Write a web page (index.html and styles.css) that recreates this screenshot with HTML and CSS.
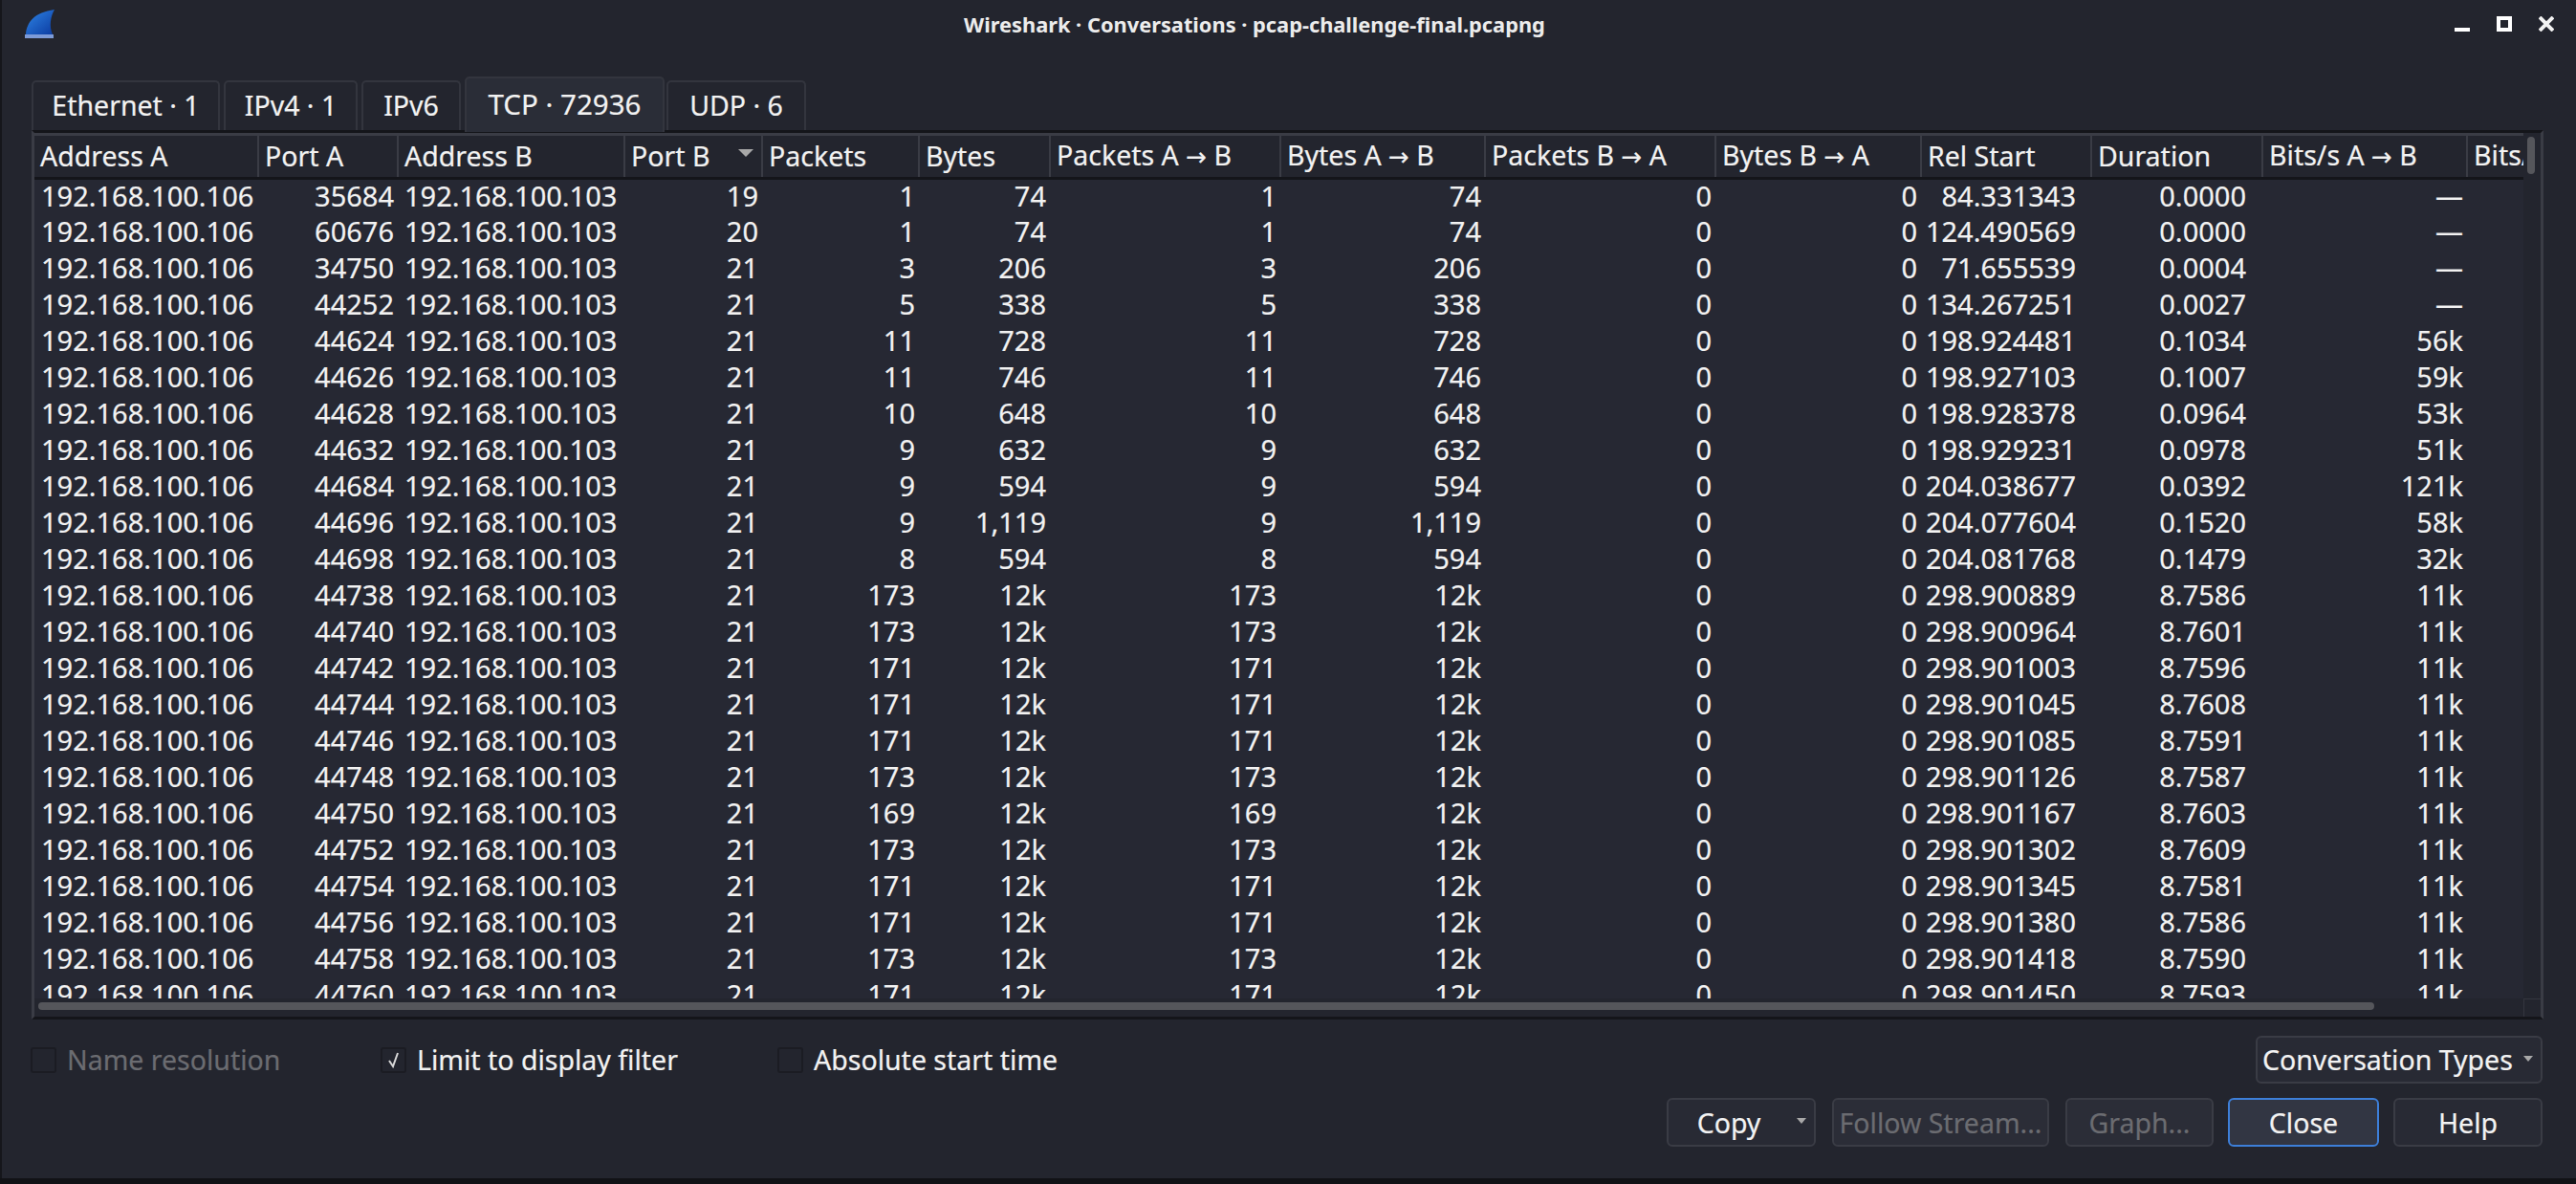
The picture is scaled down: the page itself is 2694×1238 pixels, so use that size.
FILE: index.html
```html
<!DOCTYPE html>
<html lang="en">
<head>
    <meta charset="UTF-8">
    <title>Wireshark · Conversations · pcap-challenge-final.pcapng</title>
    <link rel="stylesheet" href="styles.css">
</head>
<body>
<div class="window">
    <div class="titlebar">
        <svg class="logo" viewBox="0 0 32 32" width="32" height="32">
            <defs>
                <linearGradient id="fin" x1="0" y1="0" x2="1" y2="1">
                    <stop offset="0" stop-color="#2f86e6"/>
                    <stop offset="1" stop-color="#0b3aa0"/>
                </linearGradient>
            </defs>
            <path d="M1 27 C2 14 10 4 31 1 C27 8 25 18 29 27 Z" fill="url(#fin)"/>
            <rect x="0" y="27" width="30" height="4" fill="#7d9bd8"/>
        </svg>
        <div class="title">Wireshark · Conversations · pcap-challenge-final.pcapng</div>
        <div class="controls">
            <svg viewBox="0 0 16 16" width="16" height="16"><rect x="0" y="12" width="16" height="4" fill="#fff"/></svg>
            <svg viewBox="0 0 16 16" width="16" height="16"><rect x="2" y="2" width="12" height="12" fill="none" stroke="#fff" stroke-width="4"/></svg>
            <svg viewBox="0 0 16 16" width="16" height="16"><path d="M1 1 L15 15 M15 1 L1 15" stroke="#f2f2f2" stroke-width="4"/></svg>
        </div>
    </div>

    <div class="tabs">
        <div class="tab tab-eth">Ethernet · 1</div>
        <div class="tab tab-ip4">IPv4 · 1</div>
        <div class="tab tab-ip6">IPv6</div>
        <div class="tab tab-tcp selected">TCP · 72936</div>
        <div class="tab tab-udp">UDP · 6</div>
    </div>

    <div class="pane">
        <div class="view">
            <div class="table-clip">
                <table>
                    <colgroup>
                        <col class="c1"><col class="c2"><col class="c3"><col class="c4"><col class="c5"><col class="c6"><col class="c7"><col class="c8"><col class="c9"><col class="c10"><col class="c11"><col class="c12"><col class="c13"><col class="c14">
                    </colgroup>
                    <thead>
                        <tr>
                            <th>Address A</th><th>Port A</th><th>Address B</th><th class="sorted">Port B</th><th>Packets</th><th>Bytes</th><th>Packets A <span class="arrow">→</span> B</th><th>Bytes A <span class="arrow">→</span> B</th><th>Packets B <span class="arrow">→</span> A</th><th>Bytes B <span class="arrow">→</span> A</th><th>Rel Start</th><th>Duration</th><th>Bits/s A <span class="arrow">→</span> B</th><th>Bits/s B <span class="arrow">→</span> A</th>
                        </tr>
                    </thead>
                    <tbody>
                        <tr><td class="l">192.168.100.106</td><td>35684</td><td class="l">192.168.100.103</td><td>19</td><td>1</td><td>74</td><td>1</td><td>74</td><td>0</td><td>0</td><td>84.331343</td><td>0.0000</td><td>—</td><td></td></tr>
                        <tr><td class="l">192.168.100.106</td><td>60676</td><td class="l">192.168.100.103</td><td>20</td><td>1</td><td>74</td><td>1</td><td>74</td><td>0</td><td>0</td><td>124.490569</td><td>0.0000</td><td>—</td><td></td></tr>
                        <tr><td class="l">192.168.100.106</td><td>34750</td><td class="l">192.168.100.103</td><td>21</td><td>3</td><td>206</td><td>3</td><td>206</td><td>0</td><td>0</td><td>71.655539</td><td>0.0004</td><td>—</td><td></td></tr>
                        <tr><td class="l">192.168.100.106</td><td>44252</td><td class="l">192.168.100.103</td><td>21</td><td>5</td><td>338</td><td>5</td><td>338</td><td>0</td><td>0</td><td>134.267251</td><td>0.0027</td><td>—</td><td></td></tr>
                        <tr><td class="l">192.168.100.106</td><td>44624</td><td class="l">192.168.100.103</td><td>21</td><td>11</td><td>728</td><td>11</td><td>728</td><td>0</td><td>0</td><td>198.924481</td><td>0.1034</td><td>56k</td><td></td></tr>
                        <tr><td class="l">192.168.100.106</td><td>44626</td><td class="l">192.168.100.103</td><td>21</td><td>11</td><td>746</td><td>11</td><td>746</td><td>0</td><td>0</td><td>198.927103</td><td>0.1007</td><td>59k</td><td></td></tr>
                        <tr><td class="l">192.168.100.106</td><td>44628</td><td class="l">192.168.100.103</td><td>21</td><td>10</td><td>648</td><td>10</td><td>648</td><td>0</td><td>0</td><td>198.928378</td><td>0.0964</td><td>53k</td><td></td></tr>
                        <tr><td class="l">192.168.100.106</td><td>44632</td><td class="l">192.168.100.103</td><td>21</td><td>9</td><td>632</td><td>9</td><td>632</td><td>0</td><td>0</td><td>198.929231</td><td>0.0978</td><td>51k</td><td></td></tr>
                        <tr><td class="l">192.168.100.106</td><td>44684</td><td class="l">192.168.100.103</td><td>21</td><td>9</td><td>594</td><td>9</td><td>594</td><td>0</td><td>0</td><td>204.038677</td><td>0.0392</td><td>121k</td><td></td></tr>
                        <tr><td class="l">192.168.100.106</td><td>44696</td><td class="l">192.168.100.103</td><td>21</td><td>9</td><td>1,119</td><td>9</td><td>1,119</td><td>0</td><td>0</td><td>204.077604</td><td>0.1520</td><td>58k</td><td></td></tr>
                        <tr><td class="l">192.168.100.106</td><td>44698</td><td class="l">192.168.100.103</td><td>21</td><td>8</td><td>594</td><td>8</td><td>594</td><td>0</td><td>0</td><td>204.081768</td><td>0.1479</td><td>32k</td><td></td></tr>
                        <tr><td class="l">192.168.100.106</td><td>44738</td><td class="l">192.168.100.103</td><td>21</td><td>173</td><td>12k</td><td>173</td><td>12k</td><td>0</td><td>0</td><td>298.900889</td><td>8.7586</td><td>11k</td><td></td></tr>
                        <tr><td class="l">192.168.100.106</td><td>44740</td><td class="l">192.168.100.103</td><td>21</td><td>173</td><td>12k</td><td>173</td><td>12k</td><td>0</td><td>0</td><td>298.900964</td><td>8.7601</td><td>11k</td><td></td></tr>
                        <tr><td class="l">192.168.100.106</td><td>44742</td><td class="l">192.168.100.103</td><td>21</td><td>171</td><td>12k</td><td>171</td><td>12k</td><td>0</td><td>0</td><td>298.901003</td><td>8.7596</td><td>11k</td><td></td></tr>
                        <tr><td class="l">192.168.100.106</td><td>44744</td><td class="l">192.168.100.103</td><td>21</td><td>171</td><td>12k</td><td>171</td><td>12k</td><td>0</td><td>0</td><td>298.901045</td><td>8.7608</td><td>11k</td><td></td></tr>
                        <tr><td class="l">192.168.100.106</td><td>44746</td><td class="l">192.168.100.103</td><td>21</td><td>171</td><td>12k</td><td>171</td><td>12k</td><td>0</td><td>0</td><td>298.901085</td><td>8.7591</td><td>11k</td><td></td></tr>
                        <tr><td class="l">192.168.100.106</td><td>44748</td><td class="l">192.168.100.103</td><td>21</td><td>173</td><td>12k</td><td>173</td><td>12k</td><td>0</td><td>0</td><td>298.901126</td><td>8.7587</td><td>11k</td><td></td></tr>
                        <tr><td class="l">192.168.100.106</td><td>44750</td><td class="l">192.168.100.103</td><td>21</td><td>169</td><td>12k</td><td>169</td><td>12k</td><td>0</td><td>0</td><td>298.901167</td><td>8.7603</td><td>11k</td><td></td></tr>
                        <tr><td class="l">192.168.100.106</td><td>44752</td><td class="l">192.168.100.103</td><td>21</td><td>173</td><td>12k</td><td>173</td><td>12k</td><td>0</td><td>0</td><td>298.901302</td><td>8.7609</td><td>11k</td><td></td></tr>
                        <tr><td class="l">192.168.100.106</td><td>44754</td><td class="l">192.168.100.103</td><td>21</td><td>171</td><td>12k</td><td>171</td><td>12k</td><td>0</td><td>0</td><td>298.901345</td><td>8.7581</td><td>11k</td><td></td></tr>
                        <tr><td class="l">192.168.100.106</td><td>44756</td><td class="l">192.168.100.103</td><td>21</td><td>171</td><td>12k</td><td>171</td><td>12k</td><td>0</td><td>0</td><td>298.901380</td><td>8.7586</td><td>11k</td><td></td></tr>
                        <tr><td class="l">192.168.100.106</td><td>44758</td><td class="l">192.168.100.103</td><td>21</td><td>173</td><td>12k</td><td>173</td><td>12k</td><td>0</td><td>0</td><td>298.901418</td><td>8.7590</td><td>11k</td><td></td></tr>
                        <tr><td class="l">192.168.100.106</td><td>44760</td><td class="l">192.168.100.103</td><td>21</td><td>171</td><td>12k</td><td>171</td><td>12k</td><td>0</td><td>0</td><td>298.901450</td><td>8.7593</td><td>11k</td><td></td></tr>
                    </tbody>
                </table>
            </div>
            <div class="vscroll"><div class="vthumb"></div></div>
        </div>
        <div class="hbar">
            <div class="hscroll"><div class="hthumb"></div></div>
            <div class="corner"></div>
        </div>
    </div>

    <div class="options">
        <label class="check check-name disabled"><span class="box"></span>Name resolution</label>
        <label class="check check-limit"><span class="box"><svg viewBox="0 0 14 18" width="14" height="18"><path d="M2 10 L6 16 L11 2" fill="none" stroke="#d8d8d8" stroke-width="2"/></svg></span>Limit to display filter</label>
        <label class="check check-abs"><span class="box"></span>Absolute start time</label>
        <div class="btn btn-types">Conversation Types<span class="drop"></span></div>
    </div>

    <div class="buttons">
        <div class="btn btn-copy">Copy<span class="drop"></span></div>
        <div class="btn btn-follow disabled">Follow Stream...</div>
        <div class="btn btn-graph disabled">Graph...</div>
        <div class="btn btn-close">Close</div>
        <div class="btn btn-help">Help</div>
    </div>
</div>
</body>
</html>
```

FILE: styles.css
```css
* {
    box-sizing: border-box;
}
html, body {
    margin: 0;
    padding: 0;
    background: #111216;
}
body {
    font-family: "Noto Sans", sans-serif;
    font-size: 28.5px;
    color: #f2f2f2;
    -webkit-text-stroke: 0.2px;
    overflow: hidden;
}
.window {
    width: 2694px;
    height: 1232px;
    background: #23252e;
    border-left: 2px solid #15161b;
    display: flex;
    flex-direction: column;
}

/* title bar */
.titlebar {
    height: 50px;
    display: flex;
    align-items: center;
    position: relative;
    padding-left: 24px;
}
.title {
    position: absolute;
    left: 0;
    right: 72px;
    top: 11px;
    text-align: center;
    font-size: 21.8px;
    font-weight: 700;
    line-height: 30px;
    color: #ececec;
    -webkit-text-stroke: 0;
}
.controls {
    margin-left: auto;
    margin-right: 23px;
    display: flex;
    gap: 28px;
}

/* tabs */
.tabs {
    height: 86px;
    margin-left: 31px;
    padding-top: 27px;
    display: flex;
    align-items: flex-end;
}
.tab {
    height: 52px;
    margin-right: 4px;
    background: #23252e;
    border: 2px solid #33353e;
    border-bottom: none;
    border-radius: 5px 5px 0 0;
    text-align: center;
    line-height: 48px;
}
.tab-eth { width: 197px; }
.tab-ip4 { width: 140px; }
.tab-ip6 { width: 104px; }
.tab-tcp { width: 209px; font-size: 29.5px; }
.tab-udp { width: 146px; margin-right: 0; }
.tab.selected {
    height: 58px;
    margin-right: 2px;
    background: #2a2d37;
    line-height: 54px;
    margin-bottom: -2px;
    position: relative;
}

/* table area */
.pane {
    width: 2627px;
    height: 930px;
    margin-left: 31px;
    border: 3px solid #3a3c45;
    border-top-color: #14151a;
    border-bottom-color: #14151a;
    background: #262833;
    display: flex;
    flex-direction: column;
}
.view {
    flex: 1;
    display: flex;
    min-height: 0;
}
.table-clip {
    width: 2603px;
    overflow: hidden;
}
table {
    width: 2770px;
    table-layout: fixed;
    border-collapse: collapse;
    border-spacing: 0;
}
col.c1 { width: 234px; }
col.c2 { width: 146px; }
col.c3 { width: 237px; }
col.c4 { width: 144px; }
col.c5 { width: 164px; }
col.c6 { width: 137px; }
col.c7 { width: 241px; }
col.c8 { width: 214px; }
col.c9 { width: 241px; }
col.c10 { width: 215px; }
col.c11 { width: 178px; }
col.c12 { width: 179px; }
col.c13 { width: 214px; }
col.c14 { width: 226px; }
th {
    height: 46px;
    padding: 0 6px 2px;
    text-align: left;
    font-weight: 400;
    white-space: nowrap;
    background: #23252e;
    border-top: 3px solid #3a3c45;
    border-bottom: 3px solid #14151a;
    border-right: 2px solid #3a3c45;
    line-height: 36px;
}
.arrow {
    font-family: "DejaVu Sans", sans-serif;
    font-size: 26px;
}
th.sorted {
    position: relative;
}
th.sorted::after {
    content: "";
    position: absolute;
    right: 8px;
    top: 14px;
    border-left: 8px solid transparent;
    border-right: 8px solid transparent;
    border-top: 8px solid #a8a8a8;
}
td {
    height: 38px;
    padding: 0 4px;
    text-align: right;
    vertical-align: top;
    font-size: 29px;
    white-space: nowrap;
    line-height: 33px;
}
td.l {
    text-align: left;
    padding-left: 7px;
}
/* these two columns sit further from their right edge */
td:nth-child(11) {
    padding-right: 16px;
}
td:nth-child(12) {
    padding-right: 17px;
}
.vscroll {
    width: 18px;
    background: #23252e;
    padding: 4px 6px 0 4px;
}
.vthumb {
    height: 39px;
    background: #55565b;
    border-radius: 4px;
}
.hbar {
    height: 19px;
    display: flex;
    flex-shrink: 0;
}
.hscroll {
    width: 2603px;
    background: #23252e;
    padding: 4px 0 0 4px;
}
.hthumb {
    width: 2443px;
    height: 8px;
    background: #55565b;
    border-radius: 4px;
}
.corner {
    flex: 1;
    background: #23252e;
    border-left: 1px solid #33353e;
    border-top: 1px solid #33353e;
}

/* check boxes row */
.options {
    height: 82px;
    display: flex;
    align-items: flex-start;
    padding-top: 17px;
    position: relative;
}
.check {
    display: flex;
    align-items: center;
    height: 50px;
    white-space: nowrap;
}
.check-name { margin-left: 30px; width: 366px; }
.check-limit { width: 415px; }
.box {
    width: 27px;
    height: 27px;
    margin-right: 11px;
    background: #23252e;
    border: 2px solid #1b1c23;
    border-radius: 3px;
    display: flex;
    align-items: center;
    justify-content: center;
}
.disabled {
    color: #6b6c71;
}
.btn {
    height: 50px;
    display: flex;
    align-items: center;
    justify-content: center;
    white-space: nowrap;
    background: #282a34;
    border: 2px solid #3a3c45;
    border-radius: 6px;
    position: relative;
}
.btn.disabled {
    background: #2b2d37;
}
.btn-types {
    margin-left: auto;
    margin-right: 35px;
    width: 300px;
    justify-content: flex-start;
    padding-left: 5px;
}
.drop {
    position: absolute;
    right: 8px;
    top: 19px;
    border-left: 5px solid transparent;
    border-right: 5px solid transparent;
    border-top: 6px solid #a8a8a8;
}

/* bottom buttons */
.buttons {
    height: 51px;
    display: flex;
    justify-content: flex-end;
    padding-right: 35px;
}
.buttons .btn {
    height: 51px;
}
.btn-copy { width: 156px; margin-right: 17px; padding-right: 26px; }
.btn-follow { width: 227px; margin-right: 17px; }
.btn-graph { width: 155px; margin-right: 15px; }
.btn-close {
    width: 158px;
    margin-right: 15px;
    background: #323643;
    border-color: #3d7fd9;
}
.btn-help { width: 156px; }
```
